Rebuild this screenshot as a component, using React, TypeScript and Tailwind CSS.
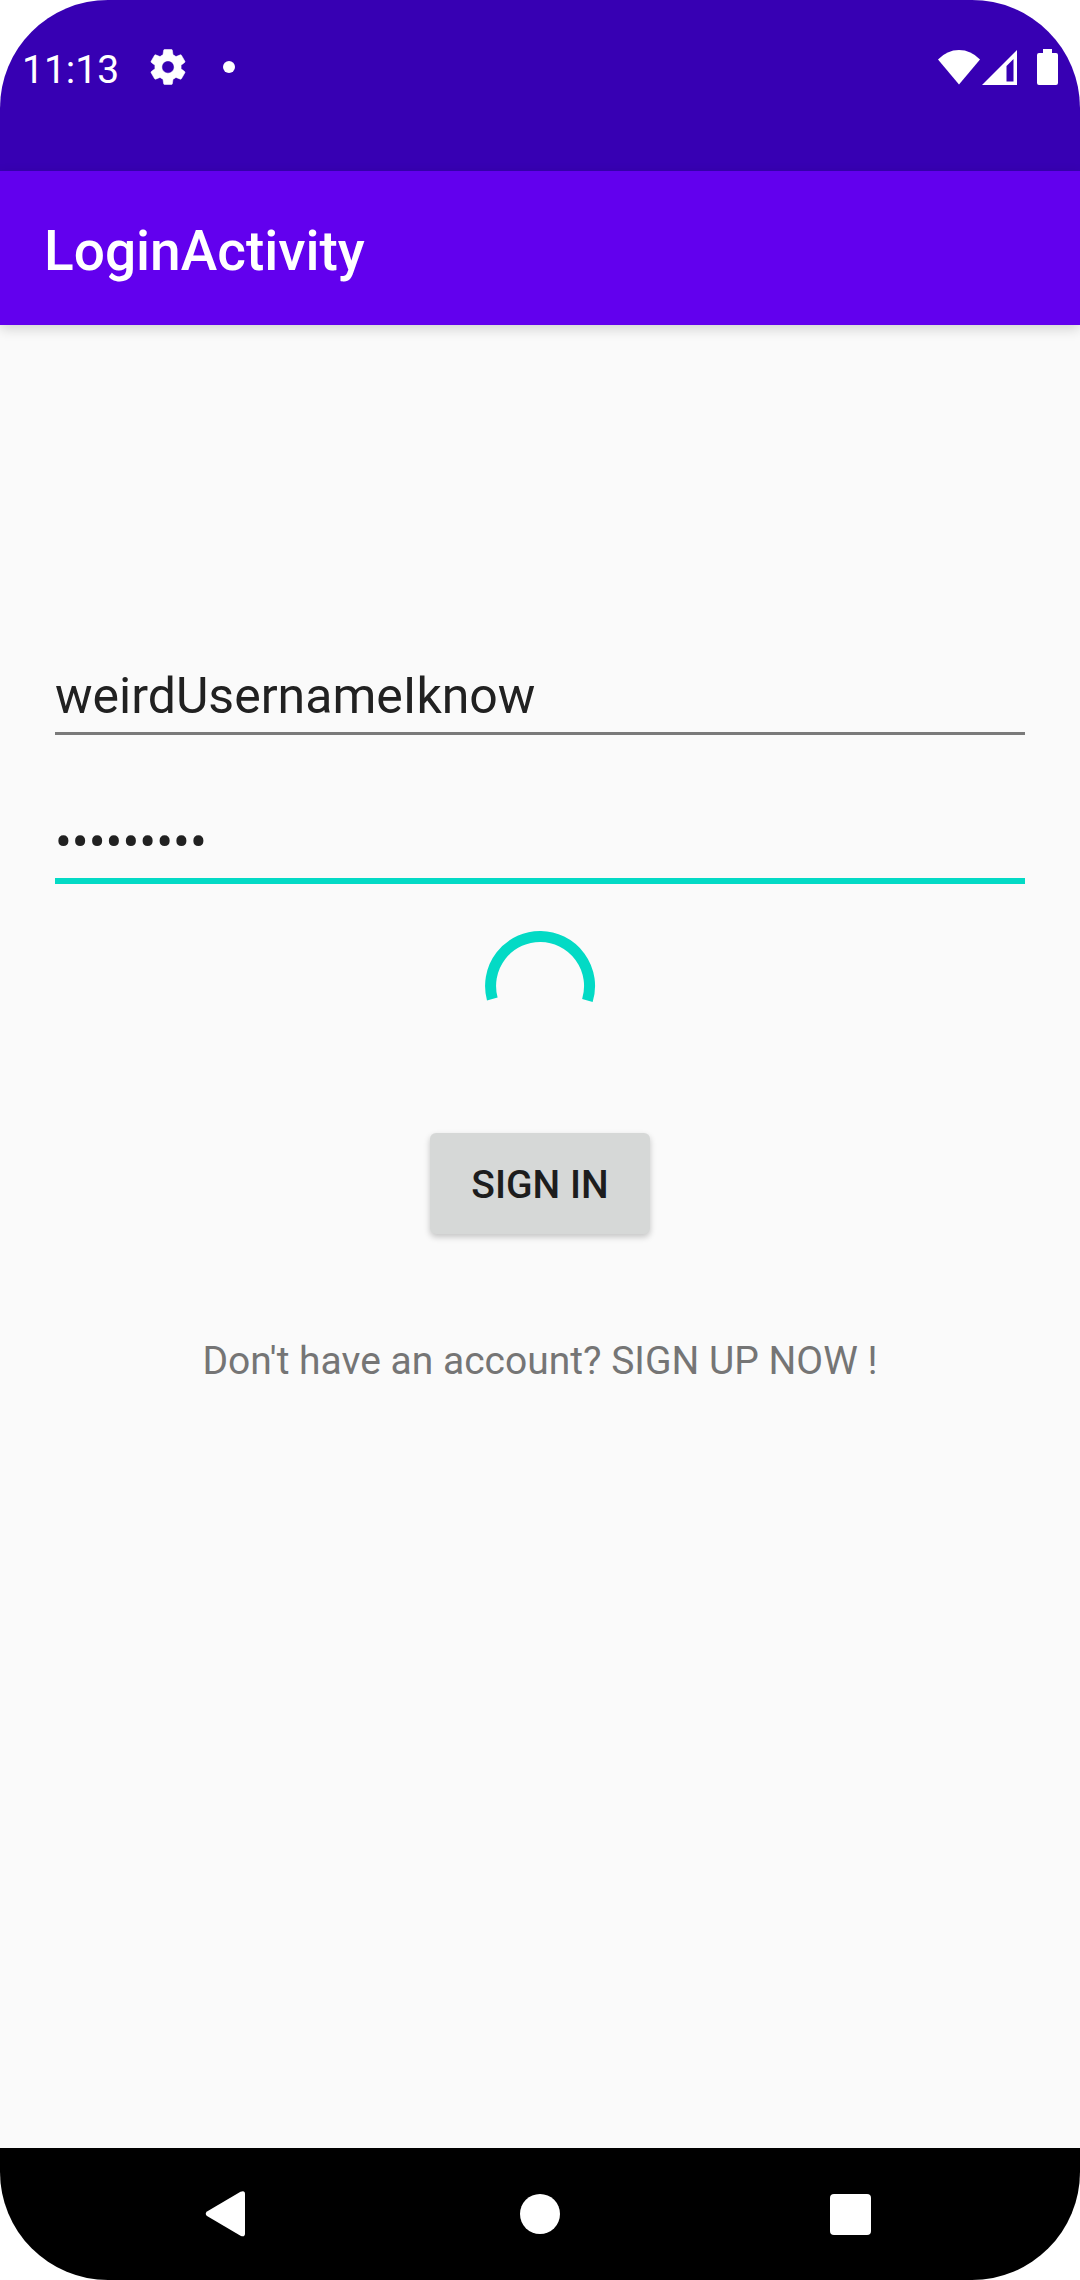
import { useState } from "react";

function StatusBar() {
  return (
    <header className="flex h-[171px] items-start justify-between bg-[#3700b3] pt-[38px] pr-[22px] pl-[22px] text-white">
      <div className="flex h-[58px] items-center">
        <span className="pt-1.5 text-[39px] leading-[58px]">11:13</span>
        <svg className="ml-7 size-[42px]" viewBox="0 0 24 24" fill="currentColor" aria-label="Settings">
          <path d="M19.43 12.98c.04-.32.07-.64.07-.98s-.03-.66-.07-.98l2.11-1.65c.19-.15.24-.42.12-.64l-2-3.46c-.12-.22-.39-.3-.61-.22l-2.49 1c-.52-.4-1.08-.73-1.69-.98l-.38-2.65C14.46 2.18 14.25 2 14 2h-4c-.25 0-.46.18-.49.42l-.38 2.65c-.61.25-1.17.59-1.69.98l-2.49-1c-.23-.09-.49 0-.61.22l-2 3.46c-.13.22-.07.49.12.64l2.11 1.65c-.04.32-.07.65-.07.98s.03.66.07.98l-2.11 1.65c-.19.15-.24.42-.12.64l2 3.46c.12.22.39.3.61.22l2.49-1c.52.4 1.08.73 1.69.98l.38 2.65c.03.24.24.42.49.42h4c.25 0 .46-.18.49-.42l.38-2.65c.61-.25 1.17-.59 1.69-.98l2.49 1c.23.09.49 0 .61-.22l2-3.46c.12-.22.07-.49-.12-.64l-2.11-1.65zM12 15.500c-1.930 0-3.500-1.570-3.500-3.500s1.570-3.500 3.500-3.500 3.500 1.570 3.500 3.500-1.570 3.500-3.500 3.500z" stroke="currentColor" strokeWidth="0.300" />
        </svg>
        <span className="ml-[34px] size-3 rounded-full bg-white" />
      </div>
      <div className="flex h-[58px] items-center">
        <svg className="h-[36px] w-[42px]" viewBox="0 0 42 36" fill="currentColor" aria-label="Wi-Fi">
          <path d="M0 10.500Q9 1 21 1T42 10.500L21 35.500Z" />
        </svg>
        <svg className="ml-[2px] h-[36px] w-[36px]" viewBox="0 0 36 36" fill="currentColor" aria-label="Mobile signal">
          <path fillRule="evenodd" d="M0 36 35 1V36ZM24.500 17V32.500H31.500V10Z" />
        </svg>
        <svg className="ml-[19px] h-[36px] w-[21px]" viewBox="0 0 21 36" fill="currentColor" aria-label="Battery">
          <path d="M6 0h9v4h4a2 2 0 0 1 2 2v28a2 2 0 0 1-2 2H2a2 2 0 0 1-2-2V6a2 2 0 0 1 2-2h4z" />
        </svg>
      </div>
    </header>
  );
}

function Spinner() {
  return (
    <svg className="mt-[35px] size-[132px]" viewBox="0 0 132 132" fill="none" role="status" aria-label="Loading">
      <path d="M18.300 80A49.500 49.500 0 1 1 113.400 81.500" stroke="#03dac5" strokeWidth="11" />
    </svg>
  );
}

function NavigationBar() {
  return (
    <nav className="grid h-[132px] grid-cols-3 bg-black px-[74px] text-white">
      <button type="button" aria-label="Back" className="flex items-center justify-center">
        <svg className="size-[48px]" viewBox="0 0 48 48" fill="currentColor">
          <path d="M2 21.500 35.500 1.800Q40 0 40 4V43.500Q40 47.500 35.500 45.800L2 26Q-.5 23.700 2 21.500Z" />
        </svg>
      </button>
      <button type="button" aria-label="Home" className="flex items-center justify-center">
        <span className="size-10 rounded-full bg-white" />
      </button>
      <button type="button" aria-label="Recent apps" className="flex items-center justify-center">
        <span className="size-[41px] rounded-sm bg-white" />
      </button>
    </nav>
  );
}

export default function App() {
  const [username, setUsername] = useState("weirdUsernameIknow");
  const [password, setPassword] = useState("password1");

  return (
    <div className="min-h-screen bg-white font-[Roboto,sans-serif]">
      <div className="flex min-h-screen flex-col overflow-hidden rounded-[108px] bg-[#fafafa]">
        <StatusBar />
        <div className="z-10 flex h-[154px] items-center bg-[#6200ee] px-11 pt-1.5 shadow-[0_4px_12px_rgba(0,0,0,0.16)]">
          <h1 className="text-[55px] font-medium text-white">LoginActivity</h1>
        </div>
        <main className="grow px-[55px] pt-[335px]">
          <form className="flex flex-col items-center" onSubmit={(e) => e.preventDefault()}>
            <input
              type="text"
              aria-label="Username"
              value={username}
              onChange={(e) => setUsername(e.target.value)}
              className="h-[75px] w-full border-b-[3px] border-[#7a7a7a] text-[50px] text-[#212121] outline-none"
            />
            <input
              type="password"
              aria-label="Password"
              value={password}
              onChange={(e) => setPassword(e.target.value)}
              className="mt-[71px] h-[78px] w-full border-b-[6px] border-[#03dac5] text-[50px] text-[#212121] outline-none"
            />
            <Spinner />
            <button
              type="submit"
              className="mt-[82px] h-[101px] w-[220px] rounded-[6px] bg-[#d6d8d7] pt-1 text-[39px] font-medium text-[#1d1d1d] shadow-[0_3px_6px_rgba(0,0,0,0.22)]"
            >
              SIGN IN
            </button>
            <a href="#signup" className="mt-[98px] text-[39px] leading-[58px] text-[#757575]">
              Don't have an account? SIGN UP NOW !
            </a>
          </form>
        </main>
        <NavigationBar />
      </div>
    </div>
  );
}
